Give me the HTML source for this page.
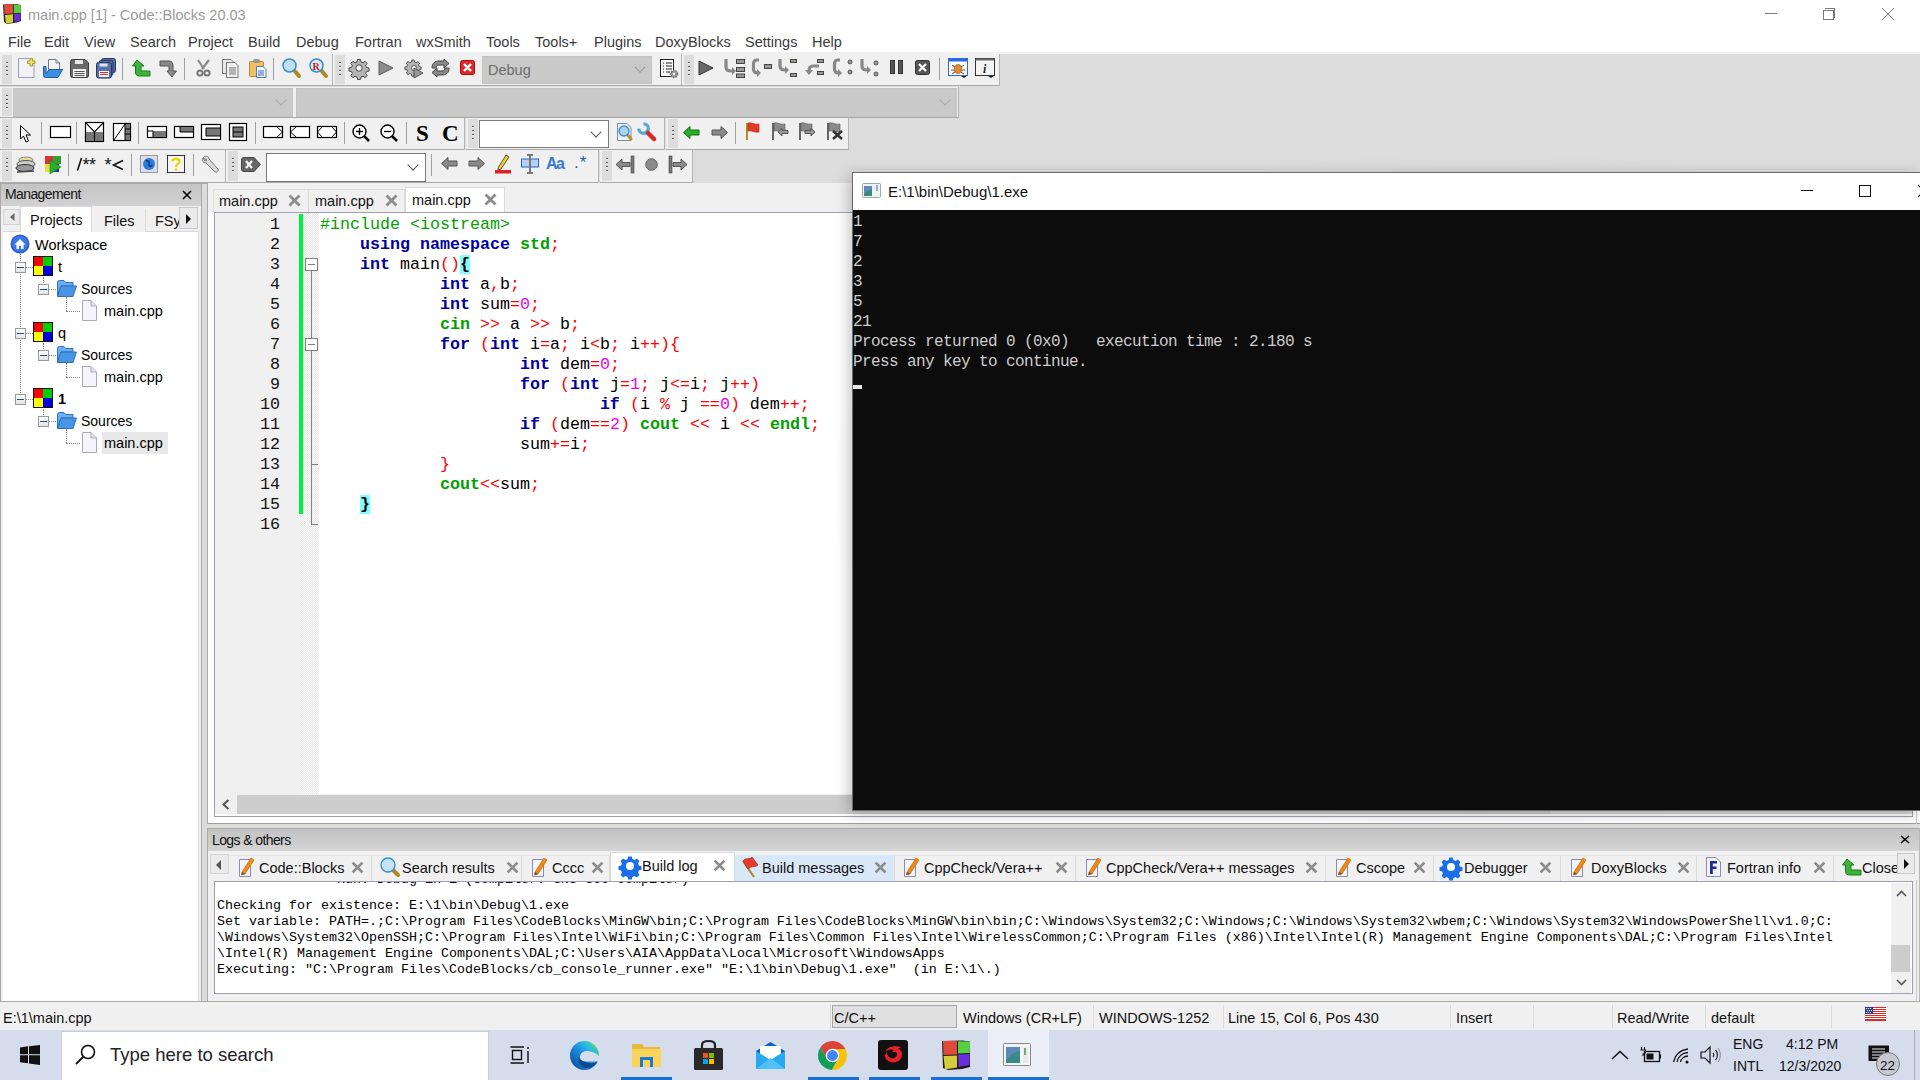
<!DOCTYPE html>
<html><head><meta charset="utf-8">
<style>
*{margin:0;padding:0;box-sizing:border-box}
html,body{width:1920px;height:1080px;overflow:hidden;background:#dcdcdc;font-family:"Liberation Sans",sans-serif;color:#000}
.a{position:absolute}
.t{position:absolute;white-space:pre;line-height:1}
svg{position:absolute;overflow:visible}
#title{left:0;top:0;width:1920px;height:28px;background:#fff}
#menu{left:0;top:28px;width:1920px;height:24px;background:#fff}
#dockline{left:0;top:52px;width:1920px;height:2px;background:#f0f0f0}
.menu span{position:absolute;top:6px;font-size:14.5px;color:#3a3a3a;white-space:pre}
.tb{position:absolute;background:#f0f0f0;border-bottom:1px solid #a9a9a9;border-right:1px solid #b4b4b4}
.grip{position:absolute;left:2px;top:1px;bottom:1px;width:10px;background:#dcdcdc}
.grip:before{content:"";position:absolute;left:4px;top:7px;width:2px;bottom:7px;background:repeating-linear-gradient(#555 0 1px,#fff 1px 2px,transparent 2px 4px)}
.sep{position:absolute;width:1px;background:#a0a0a0}
.combo{position:absolute;background:#c9c9c9;border:1px solid #c4c4c4}
.wcombo{position:absolute;background:#fff;border:1px solid #7a7a7a}
.chev{position:absolute;width:8px;height:8px;border-right:1.3px solid #777;border-bottom:1.3px solid #777;transform:rotate(45deg)}
#mgmt{left:0;top:183px;width:202px;height:821px;background:#f0f0f0}
#sash{left:202px;top:183px;width:5px;height:821px;background:#dcdcdc}
#editor{left:207px;top:183px;width:1713px;height:645px;background:#f0f0f0}
#console{left:852px;top:172px;width:1068px;height:639px;background:#0c0c0c;border:1px solid #5a5a5a;border-right:none}
#logs{left:207px;top:828px;width:1713px;height:176px;background:#f0f0f0}
#status{left:0;top:1004px;width:1920px;height:26px;background:#f0f0f0}
#taskbar{left:0;top:1030px;width:1920px;height:50px;background:#dee2ed}
</style></head>
<body>
<!--TITLE-->
<div id="title" class="a">
<svg style="left:3px;top:3px" width="20" height="21" viewBox="0 0 20 21">
<path d="M0 1.5L13 1L18 2V18L14 19.5L4 21L1 19Z" fill="#222"/>
<path d="M1 1.5 L10 1 L10 10.5 L1.5 11Z" fill="#e04a3a"/><path d="M10.8 1.2 L18 2.2 L17.8 10 L10.8 10.2Z" fill="#56d040"/>
<path d="M1.8 12 L10 11.2 L10 19.5 L3 20.5Z" fill="#d4cc38"/><path d="M11 11 L17.8 10.8 L17.5 17.5 L11.5 19Z" fill="#6a30d8"/>
</svg>
<div class="t" style="left:28px;top:8px;font-size:14.5px;color:#9a9a9a">main.cpp [1] - Code::Blocks 20.03</div>
<div class="a" style="left:1765px;top:13px;width:12px;height:1px;background:#7a7a7a"></div>
<div class="a" style="left:1823px;top:10px;width:11px;height:10px;border:1px solid #7a7a7a"></div>
<div class="a" style="left:1825px;top:8px;width:10px;height:10px;border-top:1px solid #7a7a7a;border-right:1px solid #7a7a7a"></div>
<svg style="left:1881px;top:7px" width="14" height="14"><path d="M1 1L13 13M13 1L1 13" stroke="#7a7a7a" stroke-width="1"/></svg>
</div>
<div id="menu" class="a menu">
<span style="left:8px">File</span><span style="left:44px">Edit</span><span style="left:84px">View</span><span style="left:130px">Search</span><span style="left:188px">Project</span><span style="left:248px">Build</span><span style="left:296px">Debug</span><span style="left:355px">Fortran</span><span style="left:416px">wxSmith</span><span style="left:486px">Tools</span><span style="left:535px">Tools+</span><span style="left:594px">Plugins</span><span style="left:655px">DoxyBlocks</span><span style="left:745px">Settings</span><span style="left:812px">Help</span>
</div>
<!--TOOLBARS-->
<div id="dockline" class="a"></div>
<!-- row1 toolbar A -->
<div class="tb" style="left:0;top:54px;width:333px;height:32px"><div class="grip"></div></div>
<div class="tb" style="left:333px;top:54px;width:349px;height:32px"><div class="grip"></div></div>
<div class="tb" style="left:682px;top:54px;width:318px;height:32px"><div class="grip"></div></div>
<div class="tb" style="left:0;top:87px;width:959px;height:31px"><div class="grip"></div></div>
<div class="tb" style="left:0;top:118px;width:465px;height:32px"><div class="grip"></div></div>
<div class="tb" style="left:466px;top:118px;width:199px;height:32px"><div class="grip"></div></div>
<div class="tb" style="left:666px;top:118px;width:183px;height:32px"><div class="grip"></div></div>
<div class="tb" style="left:0;top:150px;width:226px;height:33px"><div class="grip"></div></div>
<div class="tb" style="left:226px;top:150px;width:373px;height:33px"><div class="grip"></div></div>
<div class="tb" style="left:600px;top:150px;width:93px;height:33px"><div class="grip"></div></div>
<!-- row1 icons -->
<svg style="left:18px;top:58px" width="18" height="20"><path d="M0.5 0.5H11L16 5V19.5H0.5Z" fill="#f2f2fa" stroke="#9c9cc4"/><path d="M12 0.5h2.5v2.5h2.5v2.5h-2.5v2.5h-2.5v-2.5h-2.5v-2.5h2.5z" fill="#e8e46a" stroke="#a8a020" stroke-width="1"/></svg>
<svg style="left:43px;top:59px" width="20" height="19"><path d="M5.5 0.5H13L16.5 4V13H5.5Z" fill="#f6f6f6" stroke="#6a7a98"/><path d="M13 0.5V4H16.5" fill="none" stroke="#6a7a98"/><path d="M0.5 7.5V16.5Q0.5 18.5 2.5 18.5H15L19.5 10.5H6L3 15V7.5Z" fill="#3d8fe0" stroke="#1e5ca8"/></svg>
<svg style="left:70px;top:59px" width="19" height="19"><path d="M0.5 2.5Q0.5 0.5 2.5 0.5H15L18.5 4V16.5Q18.5 18.5 16.5 18.5H2.5Q0.5 18.5 0.5 16.5Z" fill="#6a6a6a" stroke="#3a3a3a"/><rect x="5" y="1" width="8" height="4" fill="#e8e8e8"/><rect x="3" y="10" width="13" height="8" fill="#f0f0f0"/><path d="M4.5 12.5h10M4.5 14.5h10M4.5 16.5h10" stroke="#555"/></svg>
<svg style="left:96px;top:58px" width="21" height="21"><rect x="5.5" y="0.5" width="14" height="14" rx="2" fill="#5a6e98" stroke="#24396a"/><rect x="3" y="2.5" width="14" height="15" rx="2" fill="#5a6e98" stroke="#24396a"/><rect x="0.5" y="4.5" width="15" height="15.5" rx="2" fill="#5872a8" stroke="#24396a"/><rect x="3.5" y="5.5" width="8" height="3" fill="#e0e4ec"/><rect x="3" y="13" width="10" height="6" fill="#f4f4f8"/><path d="M4 14.5h8M4 16.5h8" stroke="#d83030"/></svg>
<div class="sep" style="left:122px;top:58px;height:22px"></div>
<svg style="left:132px;top:59px" width="19" height="18"><path d="M5 1L0.5 7H3.5V13C3.5 16 5 17 8 17H18V12H9V7H12Z" fill="#3cb43c" stroke="#1d7a1d"/></svg>
<svg style="left:159px;top:60px" width="19" height="18"><path d="M1 1H10C13 1 14 3 14 6V11H17.5L13 17L8 11H10V6H1Z" fill="#8a8a8a" stroke="#555"/></svg>
<div class="sep" style="left:184px;top:58px;height:22px"></div>
<svg style="left:196px;top:59px" width="15" height="18"><path d="M2 1L8 10M13 1L6 10" stroke="#888" stroke-width="2.2"/><circle cx="4" cy="14" r="2.6" fill="none" stroke="#777" stroke-width="2"/><circle cx="11" cy="14" r="2.6" fill="none" stroke="#777" stroke-width="2"/></svg>
<svg style="left:222px;top:59px" width="17" height="19"><path d="M0.5 0.5H9L12 3.5V14.5H0.5Z" fill="#e8e8e8" stroke="#777"/><path d="M4.5 3.5H13L16 6.5V18.5H4.5Z" fill="#f0f0f0" stroke="#777"/><path d="M7 9h7M7 11h7M7 13h7M7 15h7" stroke="#777"/></svg>
<svg style="left:249px;top:58px" width="18" height="20"><rect x="0.5" y="3.5" width="14" height="15" rx="1" fill="#f0c060" stroke="#b88a2a"/><rect x="4" y="1" width="7" height="4" rx="2" fill="#999"/><path d="M7.5 8.5H14L17 11.5V19.5H7.5Z" fill="#f4f8ff" stroke="#5a7ab0"/><path d="M9 13h6M9 15h6M9 17h6" stroke="#3a6ac0"/></svg>
<div class="sep" style="left:273px;top:58px;height:22px"></div>
<svg style="left:282px;top:58px" width="19" height="20"><path d="M11 11L17 18" stroke="#b08a20" stroke-width="4" stroke-linecap="round"/><circle cx="7.5" cy="7.5" r="6.5" fill="#bfe0f2" stroke="#3c8cc4" stroke-width="1.5"/></svg>
<svg style="left:309px;top:58px" width="19" height="20"><path d="M11 11L17 18" stroke="#b08a20" stroke-width="4" stroke-linecap="round"/><circle cx="7.5" cy="7.5" r="6.5" fill="#d6ecf8" stroke="#3c8cc4" stroke-width="1.5"/><text x="3.5" y="11.5" font-size="10" font-weight="bold" fill="#c82020" font-family="Liberation Serif">R</text></svg>
<!-- toolbar B -->
<svg style="left:350px;top:59px" width="18" height="18" viewBox="-9 -9 18 18"><path d="M-1.5 -8.5h3l.5 2.5 2 .8 2.1-1.5 2.1 2.1-1.5 2.1.8 2 2.5.5v3l-2.5.5-.8 2 1.5 2.1-2.1 2.1-2.1-1.5-2 .8-.5 2.5h-3l-.5-2.5-2-.8-2.1 1.5-2.1-2.1 1.5-2.1-.8-2-2.5-.5v-3l2.5-.5.8-2-1.5-2.1 2.1-2.1 2.1 1.5 2-.8z" fill="#b4b4b4" stroke="#4a4a4a" stroke-width="1"/><circle r="3.2" fill="#f4f4f4" stroke="#4a4a4a"/></svg>
<svg style="left:378px;top:60px" width="16" height="16"><path d="M1 1L15 8L1 15Z" fill="#8c8c8c" stroke="#5a5a5a"/></svg>
<svg style="left:405px;top:59px" width="18" height="18" viewBox="-8 -8 18 18"><path d="M-1.2 -7h2.4l.4 2 1.6.7 1.7-1.2 1.7 1.7-1.2 1.7.7 1.6 2 .4v2.4l-2 .4-.7 1.6 1.2 1.7-1.7 1.7-1.7-1.2-1.6.7-.4 2h-2.4l-.4-2-1.6-.7-1.7 1.2-1.7-1.7 1.2-1.7-.7-1.6-2-.4v-2.4l2-.4.7-1.6-1.2-1.7 1.7-1.7 1.7 1.2 1.6-.7z" fill="#b4b4b4" stroke="#4a4a4a" stroke-width=".9"/><circle cx="1" cy="1" r="2.5" fill="#f4f4f4" stroke="#4a4a4a" stroke-width=".8"/><path d="M1 1L10 6L1 11Z" fill="#999" stroke="#4a4a4a" stroke-width=".9"/></svg>
<svg style="left:430px;top:59px" width="21" height="18"><path d="M2 9C2 4 5 2 9 2H14V0L19 4.5L14 9V6H9C7 6 6 7 6 9Z" fill="#8a8a8a" stroke="#444"/><path d="M19 9C19 14 16 16 12 16H7V18L2 13.5L7 9V12H12C14 12 15 11 15 9Z" fill="#8a8a8a" stroke="#444"/></svg>
<svg style="left:460px;top:60px" width="15" height="15"><rect x="0.5" y="0.5" width="14" height="14" rx="2" fill="#e02828" stroke="#a01010"/><path d="M4 4L11 11M11 4L4 11" stroke="#fff" stroke-width="2.4"/></svg>
<div class="combo" style="left:482px;top:56px;width:170px;height:28px"></div>
<div class="t" style="left:488px;top:63px;font-size:14.5px;color:#6d6d6d">Debug</div>
<div class="chev" style="left:636px;top:63px;border-color:#999"></div>
<svg style="left:660px;top:59px" width="18" height="20"><rect x="0.5" y="0.5" width="13" height="17" fill="#fff" stroke="#222"/><path d="M3 4h1M6 4h6M3 7h1M6 7h6M3 10h1M6 10h6M3 13h1M6 13h4" stroke="#222"/><circle cx="14" cy="15" r="3.5" fill="#999" stroke="#777" stroke-width="1.6" stroke-dasharray="1.5 1"/><circle cx="14" cy="15" r="1.2" fill="#eee"/></svg>
<!-- toolbar C -->
<svg style="left:698px;top:60px" width="16" height="16"><path d="M1 1L15 8L1 15Z" fill="#6a6a6a" stroke="#333"/></svg>
<svg style="left:724px;top:58px" width="21" height="20"><path d="M2 1V9C2 12 4 13 7 13H9" fill="none" stroke="#888" stroke-width="3.2"/><path d="M8 9L12 13L8 17Z" fill="#888"/><rect x="12.5" y="1.5" width="8" height="4" fill="#999" stroke="#444"/><rect x="12.5" y="9.5" width="8" height="4" fill="#999" stroke="#444"/><rect x="12.5" y="16" width="8" height="3.5" fill="#999" stroke="#444"/></svg>
<svg style="left:752px;top:58px" width="20" height="20"><path d="M7 2H5C2.5 2 1.5 4 1.5 6V11C1.5 14 3 15 6 15" fill="none" stroke="#888" stroke-width="3.2"/><path d="M5 11L9 15L5 19Z" fill="#888"/><rect x="12.5" y="6.5" width="7" height="4" fill="#999" stroke="#444"/></svg>
<svg style="left:778px;top:58px" width="20" height="20"><path d="M2 1V8C2 11 4 12 7 12H8" fill="none" stroke="#888" stroke-width="3.2"/><path d="M7 8L11 12L7 16Z" fill="#888"/><rect x="12.5" y="1.5" width="6" height="3" fill="#999" stroke="#444"/><rect x="12.5" y="15.5" width="6" height="3" fill="#999" stroke="#444"/></svg>
<svg style="left:805px;top:58px" width="20" height="20"><path d="M14 8H8C5 8 4 10 4 13" fill="none" stroke="#888" stroke-width="3.2"/><path d="M0 12L4 17L8 12Z" fill="#888"/><rect x="12.5" y="1.5" width="6" height="3" fill="#999" stroke="#444"/><rect x="12.5" y="13.5" width="6" height="3" fill="#999" stroke="#444"/></svg>
<svg style="left:833px;top:58px" width="21" height="20"><path d="M7 2H5C2.5 2 1.5 4 1.5 6V11C1.5 14 3 15 6 15" fill="none" stroke="#888" stroke-width="3.2"/><path d="M5 11L9 15L5 19Z" fill="#888"/><circle cx="17" cy="4" r="2" fill="#999" stroke="#555"/><circle cx="17" cy="14" r="2" fill="#999" stroke="#555"/></svg>
<svg style="left:860px;top:58px" width="20" height="20"><path d="M2 1V8C2 11 4 12 7 12H8" fill="none" stroke="#888" stroke-width="3.2"/><path d="M7 8L11 12L7 16Z" fill="#888"/><circle cx="16" cy="5" r="2" fill="#999" stroke="#555"/><circle cx="16" cy="16" r="2" fill="#999" stroke="#555"/></svg>
<svg style="left:890px;top:60px" width="14" height="16"><rect x="0.5" y="0.5" width="4" height="13" fill="#555" stroke="#333"/><rect x="8.5" y="0.5" width="4" height="13" fill="#555" stroke="#333"/></svg>
<svg style="left:915px;top:60px" width="15" height="15"><rect x="0.5" y="0.5" width="14" height="14" rx="2" fill="#555" stroke="#333"/><path d="M4 4L11 11M11 4L4 11" stroke="#fff" stroke-width="2.2"/></svg>
<div class="sep" style="left:939px;top:58px;height:22px"></div>
<svg style="left:948px;top:58px" width="21" height="20"><rect x="0.5" y="0.5" width="19" height="17" fill="#fff" stroke="#2a6ae0"/><rect x="0.5" y="0.5" width="19" height="3" fill="#2a6ae0"/><ellipse cx="10" cy="11" rx="3.5" ry="4.5" fill="#e08a3a" stroke="#8a4a10" stroke-width=".6"/><path d="M4 7L7 9M16 7L13 9M3 12H6.5M17 12H13.5M4 16L7 14M16 16L13 14" stroke="#8a4a10"/><path d="M13 18H19L16 20Z" fill="#222"/></svg>
<svg style="left:975px;top:58px" width="21" height="20"><rect x="0.5" y="0.5" width="19" height="17" fill="#f4f4f4" stroke="#333"/><rect x="0.5" y="0.5" width="19" height="2" fill="#666"/><text x="8" y="15" font-size="12" font-style="italic" font-weight="bold" font-family="Liberation Serif" fill="#222">i</text><path d="M13 18H19L16 20Z" fill="#222"/></svg>
<!-- row2 combos -->
<div class="combo" style="left:13px;top:88px;width:280px;height:29px"></div>
<div class="chev" style="left:277px;top:96px;border-color:#aaa"></div>
<div class="combo" style="left:296px;top:88px;width:661px;height:29px"></div>
<div class="chev" style="left:941px;top:96px;border-color:#aaa"></div>
<!-- row3 toolbar D -->
<svg style="left:20px;top:125px" width="11" height="18"><path d="M0.5 0.5V14L3.5 11L6 17L8.5 16L6 10H10.5Z" fill="#fff" stroke="#000"/></svg>
<div class="sep" style="left:41px;top:122px;height:22px"></div>
<svg style="left:50px;top:126px" width="21" height="13"><rect x="0.5" y="0.5" width="20" height="11" fill="#fff" stroke="#000" stroke-width="1.2"/></svg>
<div class="sep" style="left:76px;top:122px;height:22px"></div>
<svg style="left:85px;top:122px" width="20" height="20"><rect x="0.5" y="0.5" width="18" height="19" fill="#fff" stroke="#000" stroke-width="1.2"/><rect x="1" y="10" width="17" height="9" fill="#777"/><path d="M1 1L9.5 10L18 1M9.5 10V19" stroke="#000" stroke-width="1.1" fill="none"/></svg>
<svg style="left:113px;top:123px" width="19" height="19"><rect x="0.5" y="0.5" width="17" height="17" fill="#fff" stroke="#000" stroke-width="1.2"/><rect x="12" y="1" width="5" height="16" fill="#777"/><path d="M1 17L12 1M12 1V17M12 6H17M12 11H17" stroke="#000" stroke-width="1"/></svg>
<div class="sep" style="left:138px;top:122px;height:22px"></div>
<svg style="left:147px;top:126px" width="21" height="13"><rect x="0.5" y="0.5" width="19" height="11" fill="#fff" stroke="#000" stroke-width="1.2"/><rect x="6" y="5" width="13" height="6" fill="#777"/><path d="M1 5H6V11" stroke="#000" fill="none"/></svg>
<svg style="left:174px;top:126px" width="21" height="13"><rect x="0.5" y="0.5" width="19" height="11" fill="#fff" stroke="#000" stroke-width="1.2"/><rect x="6" y="1" width="13" height="5" fill="#777"/><path d="M6 1V6H19" stroke="#000" fill="none"/></svg>
<svg style="left:201px;top:124px" width="21" height="17"><rect x="0.5" y="0.5" width="19" height="15" fill="#fff" stroke="#000" stroke-width="1.2"/><rect x="5" y="4" width="14" height="8" fill="#777"/><path d="M19 4H5V12H19" stroke="#000" fill="none"/></svg>
<svg style="left:229px;top:123px" width="19" height="18"><rect x="0.5" y="0.5" width="17" height="17" fill="#fff" stroke="#000" stroke-width="1.2"/><rect x="4" y="4" width="10" height="10" fill="#777" stroke="#000"/><path d="M4 9H14" stroke="#000"/></svg>
<div class="sep" style="left:255px;top:122px;height:22px"></div>
<svg style="left:263px;top:126px" width="21" height="13"><rect x="0.5" y="0.5" width="19" height="11" fill="#fff" stroke="#000" stroke-width="1.2"/><path d="M14 1L19.5 6L14 11" stroke="#000" fill="none"/></svg>
<svg style="left:290px;top:126px" width="21" height="13"><rect x="0.5" y="0.5" width="19" height="11" fill="#fff" stroke="#000" stroke-width="1.2"/><path d="M6 1L0.5 6L6 11" stroke="#000" fill="none"/></svg>
<svg style="left:317px;top:126px" width="21" height="13"><rect x="0.5" y="0.5" width="19" height="11" fill="#fff" stroke="#000" stroke-width="1.2"/><path d="M5 1L0.5 6L5 11M15 1L19.5 6L15 11" stroke="#000" fill="none"/></svg>
<div class="sep" style="left:344px;top:122px;height:22px"></div>
<svg style="left:352px;top:124px" width="20" height="20"><circle cx="7.5" cy="7.5" r="6.5" fill="#fff" stroke="#000" stroke-width="1.4"/><path d="M7.5 4V11M4 7.5H11" stroke="#000" stroke-width="1.3"/><path d="M12 12L17 17" stroke="#000" stroke-width="2.5"/></svg>
<svg style="left:380px;top:124px" width="20" height="20"><circle cx="7.5" cy="7.5" r="6.5" fill="#fff" stroke="#000" stroke-width="1.4"/><path d="M4 7.5H11" stroke="#000" stroke-width="1.3"/><path d="M12 12L17 17" stroke="#000" stroke-width="2.5"/></svg>
<div class="sep" style="left:406px;top:122px;height:22px"></div>
<div class="t" style="left:416px;top:122px;font-family:'Liberation Serif';font-size:23px;font-weight:bold">S</div>
<div class="t" style="left:442px;top:122px;font-family:'Liberation Serif';font-size:23px;font-weight:bold">C</div>
<!-- toolbar E -->
<div class="wcombo" style="left:479px;top:120px;width:130px;height:28px"></div>
<div class="chev" style="left:592px;top:128px;border-color:#555"></div>
<svg style="left:617px;top:123px" width="17" height="19"><path d="M0.5 0.5H10L14 4.5V17.5H0.5Z" fill="#eef2f8" stroke="#7a8aa8"/><path d="M9 10L14 16" stroke="#c09020" stroke-width="3" stroke-linecap="round"/><circle cx="7" cy="8" r="5" fill="#a8d4f0" stroke="#3c8cc4" stroke-width="1.3"/></svg>
<svg style="left:637px;top:122px" width="20" height="20"><path d="M6.5 1.8A4.8 4.8 0 1 1 1.8 6.5" stroke="#5aaad8" stroke-width="3.2" fill="none"/><path d="M8.5 8.5L11 11" stroke="#5aaad8" stroke-width="3.5"/><path d="M11 11L17 17" stroke="#d42a2a" stroke-width="4.5" stroke-linecap="round"/></svg>
<!-- toolbar F -->
<svg style="left:683px;top:126px" width="17" height="13"><path d="M0.5 6.5L7 0.5V4H16V9H7V12.5Z" fill="#28b028" stroke="#117011"/></svg>
<svg style="left:711px;top:126px" width="17" height="13"><path d="M16.5 6.5L10 0.5V4H1V9H10V12.5Z" fill="#8a8a8a" stroke="#555"/></svg>
<div class="sep" style="left:735px;top:122px;height:22px"></div>
<svg style="left:746px;top:122px" width="15" height="20"><rect x="0" y="1" width="2" height="17" fill="#b8901a"/><path d="M2 1C6 0 8 3 13 2V10C8 11 6 8 2 9Z" fill="#e03a2a" stroke="#b02010" stroke-width=".6"/></svg>
<svg style="left:772px;top:122px" width="18" height="20"><rect x="0" y="1" width="2" height="17" fill="#666"/><path d="M2 1C6 0 8 3 13 2V10C8 11 6 8 2 9Z" fill="#8a8a8a" stroke="#555" stroke-width=".6"/><path d="M6 10L10 6V8.5H16V11.5H10V14Z" fill="#999" stroke="#555"/></svg>
<svg style="left:799px;top:122px" width="18" height="20"><rect x="0" y="1" width="2" height="17" fill="#666"/><path d="M2 1C6 0 8 3 13 2V10C8 11 6 8 2 9Z" fill="#8a8a8a" stroke="#555" stroke-width=".6"/><path d="M16 10L12 6V8.5H6V11.5H12V14Z" fill="#999" stroke="#555"/></svg>
<svg style="left:827px;top:122px" width="18" height="20"><rect x="0" y="1" width="2" height="17" fill="#666"/><path d="M2 1C6 0 8 3 13 2V10C8 11 6 8 2 9Z" fill="#8a8a8a" stroke="#555" stroke-width=".6"/><path d="M6 9L15 17M15 9L6 17" stroke="#333" stroke-width="2.4"/></svg>
<!-- row4 toolbar G -->
<svg style="left:15px;top:155px" width="21" height="20"><ellipse cx="11" cy="5" rx="7" ry="3" fill="#e8d890" stroke="#888"/><ellipse cx="11" cy="9" rx="9" ry="3.5" fill="#ccc" stroke="#555"/><ellipse cx="10" cy="13" rx="9" ry="3.5" fill="#999" stroke="#333"/><path d="M2 17L19 16" stroke="#444" stroke-width="1.5"/></svg>
<svg style="left:44px;top:156px" width="18" height="18"><rect x="1" y="0" width="8" height="8" fill="#e03030"/><rect x="9" y="0" width="8" height="8" fill="#30a030"/><rect x="1" y="8" width="8" height="8" fill="#e0e040"/><rect x="9" y="8" width="6" height="8" fill="#3030c0"/><path d="M6 4L17 11L6 18Z" fill="#28b028" stroke="#1a801a" stroke-width=".6"/></svg>
<div class="sep" style="left:68px;top:154px;height:22px"></div>
<svg style="left:76px;top:155px" width="22" height="18"><path d="M5.5 3L1.5 15.5" stroke="#111" stroke-width="1.6"/><text x="6.5" y="16" font-family="Liberation Sans" font-size="18" fill="#111" letter-spacing="-0.5">**</text></svg>
<svg style="left:104px;top:155px" width="22" height="18"><text x="0.5" y="16" font-family="Liberation Sans" font-size="18" fill="#111">*</text><path d="M19 5.5L9.5 10L19 14.5" stroke="#111" stroke-width="1.6" fill="none"/></svg>
<div class="sep" style="left:131px;top:154px;height:22px"></div>
<svg style="left:140px;top:155px" width="19" height="19"><rect x="0.5" y="0.5" width="17" height="17" fill="#dde" stroke="#999"/><circle cx="9" cy="9" r="6" fill="#2a7ad8"/><path d="M6 6C8 5 10 7 9 9C8 11 11 12 12 10" stroke="#0a3a80" stroke-width="1.5" fill="none"/></svg>
<svg style="left:167px;top:155px" width="19" height="19"><rect x="0.5" y="0.5" width="17" height="17" fill="#f4f4f4" stroke="#333"/><path d="M5.5 6.5C5.5 3 12.5 3 12.5 6.5C12.5 9 9 9 9 12" stroke="#e8d800" stroke-width="2.2" fill="none"/><circle cx="9" cy="14.5" r="1.3" fill="#e8d800"/></svg>
<div class="sep" style="left:193px;top:154px;height:22px"></div>
<svg style="left:201px;top:155px" width="19" height="19"><path d="M2 3C4 0 8 1 8 4L17 14C18 16 16 18 14 17L5 8C2 8 0 5 2 3L4 6L6 5Z" fill="#d8d8d8" stroke="#777"/></svg>
<!-- toolbar H -->
<svg style="left:241px;top:157px" width="20" height="15"><path d="M0.5 3Q0.5 0.5 3 0.5H13L19.5 7.5L13 14.5H3Q0.5 14.5 0.5 12Z" fill="#666" stroke="#444"/><path d="M5 4L11 11M11 4L5 11" stroke="#fff" stroke-width="2.2"/></svg>
<div class="wcombo" style="left:266px;top:153px;width:160px;height:29px"></div>
<div class="chev" style="left:409px;top:161px;border-color:#555"></div>
<div class="sep" style="left:431px;top:154px;height:22px"></div>
<svg style="left:441px;top:157px" width="17" height="13"><path d="M0.5 6.5L7 0.5V4H16V9H7V12.5Z" fill="#8a8a8a" stroke="#555"/></svg>
<svg style="left:468px;top:157px" width="17" height="13"><path d="M16.5 6.5L10 0.5V4H1V9H10V12.5Z" fill="#8a8a8a" stroke="#555"/></svg>
<svg style="left:495px;top:154px" width="17" height="20"><path d="M3 14L11 1L14 3L6 15L3 16Z" fill="#f0d020" stroke="#555"/><rect x="0" y="16" width="16" height="3.5" fill="#e02020"/></svg>
<svg style="left:521px;top:154px" width="19" height="20"><rect x="0.5" y="5" width="17" height="8" fill="#b8d0f0" stroke="#1a6ad0"/><path d="M9 1V19M6 1H12M6 19H12" stroke="#777" stroke-width="2"/></svg>
<div class="t" style="left:546px;top:156px;font-size:16px;font-weight:bold;color:#3a7ad0;letter-spacing:-1.5px">Aa</div>
<div class="t" style="left:574px;top:154px;font-size:17px;color:#1a5ab0;letter-spacing:1px">.*</div>
<!-- toolbar I -->
<svg style="left:615px;top:155px" width="20" height="19"><path d="M1 9.5L7 4V7.5H15V11.5H7V15Z" fill="#8a8a8a" stroke="#555"/><rect x="16" y="1" width="3" height="17" fill="#777" stroke="#444" stroke-width=".6"/></svg>
<svg style="left:645px;top:158px" width="13" height="13"><circle cx="6.5" cy="6.5" r="5.8" fill="#8a8a8a" stroke="#666"/></svg>
<svg style="left:668px;top:155px" width="20" height="19"><rect x="1" y="1" width="3" height="17" fill="#777" stroke="#444" stroke-width=".6"/><path d="M19 9.5L13 4V7.5H5V11.5H13V15Z" fill="#8a8a8a" stroke="#555"/></svg>

<!--/TOOLBARS-->

<!--MGMT-->
<div id="mgmt" class="a">
 <div class="a" style="left:1px;top:1px;width:200px;height:22px;background:linear-gradient(#c4c4c4,#d2d2d2)"></div>
 <div class="t" style="left:5px;top:4px;font-size:14px;letter-spacing:-0.6px;color:#111">Management</div>
 <svg style="left:182px;top:7px" width="10" height="10"><path d="M1 1L9 9M9 1L1 9" stroke="#000" stroke-width="1.6"/></svg>
 <!-- tabs row -->
 <div class="a" style="left:3px;top:48px;width:196px;height:1px;background:#d9d9d9"></div>
 <div class="a" style="left:3px;top:26px;width:17px;height:16px;background:#eaeaea;border:1px solid #d4d4d4"></div>
 <svg style="left:10px;top:30px" width="5" height="8"><path d="M4.5 0L0 4L4.5 8Z" fill="#666"/></svg>
 <div class="a" style="left:20px;top:23px;width:72px;height:27px;background:#fff;border:1px solid #d9d9d9;border-bottom:none"></div>
 <div class="t" style="left:30px;top:30px;font-size:14.5px;color:#111">Projects</div>
 <div class="a" style="left:92px;top:26px;width:54px;height:23px;background:#f0f0f0;border-right:1px solid #d9d9d9"></div>
 <div class="t" style="left:104px;top:31px;font-size:14.5px;color:#111">Files</div>
 <div class="t" style="left:155px;top:31px;font-size:14.5px;color:#111">FSy</div>
 <div class="a" style="left:179px;top:24px;width:19px;height:22px;background:#eaeaea;border:1px solid #c8c8c8"></div>
 <svg style="left:186px;top:31px" width="6" height="10"><path d="M0 0L5 5L0 10Z" fill="#111"/></svg>
 <!-- tree -->
 <div class="a" style="left:3px;top:49px;width:196px;height:772px;background:#fff;border-right:1px solid #dcdcdc"></div>
</div>
<div id="tree" class="a" style="left:0;top:0">
 <svg style="left:10px;top:234px" width="20" height="20"><circle cx="10" cy="10" r="9.5" fill="#2a5ad8"/><circle cx="10" cy="10" r="8" fill="#3a78e8"/><path d="M4.5 10.5L10 5L15.5 10.5H13.5V15H6.5V10.5Z" fill="#fff"/><rect x="9" y="12" width="2" height="3" fill="#3a78e8"/></svg>
 <div class="t" style="left:35px;top:238px;font-size:14.5px">Workspace</div>
 <!-- dotted lines -->
 <div class="a" style="left:20px;top:254px;width:1px;height:145px;border-left:1px dotted #888"></div>
 <!-- project rows at 267, 333, 399 -->
 <div class="a" style="left:15px;top:262px;width:11px;height:11px;border:1px solid #999;background:linear-gradient(#fff,#e4e4e4)"></div><div class="a" style="left:17px;top:267px;width:7px;height:1px;background:#2a4a9a"></div><div class="a" style="left:26px;top:267px;width:7px;height:1px;border-top:1px dotted #888"></div><svg style="left:33px;top:256px" width="20" height="20"><rect x="0" y="0" width="20" height="20" fill="#111"/><rect x="1" y="1" width="9" height="9" fill="#ff0000"/><rect x="10" y="1" width="9" height="9" fill="#00d000"/><rect x="1" y="10" width="9" height="9" fill="#ffff00"/><rect x="10" y="10" width="9" height="9" fill="#0000e0"/></svg><div class="a" style="left:43px;top:277px;width:1px;height:12px;border-left:1px dotted #888"></div><div class="a" style="left:38px;top:284px;width:11px;height:11px;border:1px solid #999;background:linear-gradient(#fff,#e4e4e4)"></div><div class="a" style="left:40px;top:289px;width:7px;height:1px;background:#2a4a9a"></div><div class="a" style="left:49px;top:289px;width:7px;height:1px;border-top:1px dotted #888"></div><svg style="left:57px;top:280px" width="20" height="17"><path d="M0.5 2.5Q0.5 0.5 2.5 0.5H7L9 2.5H16V6H4L0.5 16Z" fill="#6aaef0" stroke="#2a70c8"/><path d="M0.5 16.5L4 6H19.5L16 16.5Z" fill="#4a94e4" stroke="#2a70c8"/></svg><div class="a" style="left:66px;top:297px;width:1px;height:14px;border-left:1px dotted #888"></div><div class="a" style="left:66px;top:311px;width:14px;height:1px;border-top:1px dotted #888"></div><svg style="left:82px;top:300px" width="15" height="21"><path d="M0.5 0.5H9L14.5 6V20.5H0.5Z" fill="#f4f4fa" stroke="#a8a8c0"/><path d="M9 0.5V6H14.5" fill="#e0e0ea" stroke="#a8a8c0"/></svg><div class="a" style="left:15px;top:328px;width:11px;height:11px;border:1px solid #999;background:linear-gradient(#fff,#e4e4e4)"></div><div class="a" style="left:17px;top:333px;width:7px;height:1px;background:#2a4a9a"></div><div class="a" style="left:26px;top:333px;width:7px;height:1px;border-top:1px dotted #888"></div><svg style="left:33px;top:322px" width="20" height="20"><rect x="0" y="0" width="20" height="20" fill="#111"/><rect x="1" y="1" width="9" height="9" fill="#ff0000"/><rect x="10" y="1" width="9" height="9" fill="#00d000"/><rect x="1" y="10" width="9" height="9" fill="#ffff00"/><rect x="10" y="10" width="9" height="9" fill="#0000e0"/></svg><div class="a" style="left:43px;top:343px;width:1px;height:12px;border-left:1px dotted #888"></div><div class="a" style="left:38px;top:350px;width:11px;height:11px;border:1px solid #999;background:linear-gradient(#fff,#e4e4e4)"></div><div class="a" style="left:40px;top:355px;width:7px;height:1px;background:#2a4a9a"></div><div class="a" style="left:49px;top:355px;width:7px;height:1px;border-top:1px dotted #888"></div><svg style="left:57px;top:346px" width="20" height="17"><path d="M0.5 2.5Q0.5 0.5 2.5 0.5H7L9 2.5H16V6H4L0.5 16Z" fill="#6aaef0" stroke="#2a70c8"/><path d="M0.5 16.5L4 6H19.5L16 16.5Z" fill="#4a94e4" stroke="#2a70c8"/></svg><div class="a" style="left:66px;top:363px;width:1px;height:14px;border-left:1px dotted #888"></div><div class="a" style="left:66px;top:377px;width:14px;height:1px;border-top:1px dotted #888"></div><svg style="left:82px;top:366px" width="15" height="21"><path d="M0.5 0.5H9L14.5 6V20.5H0.5Z" fill="#f4f4fa" stroke="#a8a8c0"/><path d="M9 0.5V6H14.5" fill="#e0e0ea" stroke="#a8a8c0"/></svg><div class="a" style="left:15px;top:394px;width:11px;height:11px;border:1px solid #999;background:linear-gradient(#fff,#e4e4e4)"></div><div class="a" style="left:17px;top:399px;width:7px;height:1px;background:#2a4a9a"></div><div class="a" style="left:26px;top:399px;width:7px;height:1px;border-top:1px dotted #888"></div><svg style="left:33px;top:388px" width="20" height="20"><rect x="0" y="0" width="20" height="20" fill="#111"/><rect x="1" y="1" width="9" height="9" fill="#ff0000"/><rect x="10" y="1" width="9" height="9" fill="#00d000"/><rect x="1" y="10" width="9" height="9" fill="#ffff00"/><rect x="10" y="10" width="9" height="9" fill="#0000e0"/></svg><div class="a" style="left:43px;top:409px;width:1px;height:12px;border-left:1px dotted #888"></div><div class="a" style="left:38px;top:416px;width:11px;height:11px;border:1px solid #999;background:linear-gradient(#fff,#e4e4e4)"></div><div class="a" style="left:40px;top:421px;width:7px;height:1px;background:#2a4a9a"></div><div class="a" style="left:49px;top:421px;width:7px;height:1px;border-top:1px dotted #888"></div><svg style="left:57px;top:412px" width="20" height="17"><path d="M0.5 2.5Q0.5 0.5 2.5 0.5H7L9 2.5H16V6H4L0.5 16Z" fill="#6aaef0" stroke="#2a70c8"/><path d="M0.5 16.5L4 6H19.5L16 16.5Z" fill="#4a94e4" stroke="#2a70c8"/></svg><div class="a" style="left:66px;top:429px;width:1px;height:14px;border-left:1px dotted #888"></div><div class="a" style="left:66px;top:443px;width:14px;height:1px;border-top:1px dotted #888"></div><svg style="left:82px;top:432px" width="15" height="21"><path d="M0.5 0.5H9L14.5 6V20.5H0.5Z" fill="#f4f4fa" stroke="#a8a8c0"/><path d="M9 0.5V6H14.5" fill="#e0e0ea" stroke="#a8a8c0"/></svg>
 <div class="a" style="left:102px;top:432px;width:66px;height:22px;background:#e8e8e8"></div>
 <div class="t" style="left:58px;top:260px;font-size:14.5px;">t</div><div class="t" style="left:81px;top:282px;font-size:14px">Sources</div><div class="t" style="left:104px;top:304px;font-size:14.5px">main.cpp</div><div class="t" style="left:58px;top:326px;font-size:14.5px;">q</div><div class="t" style="left:81px;top:348px;font-size:14px">Sources</div><div class="t" style="left:104px;top:370px;font-size:14.5px">main.cpp</div><div class="t" style="left:58px;top:392px;font-size:14.5px;font-weight:bold;">1</div><div class="t" style="left:81px;top:414px;font-size:14px">Sources</div><div class="t" style="left:104px;top:436px;font-size:14.5px">main.cpp</div>
</div>

<div id="sash" class="a"></div><div class="a" style="left:0;top:183px;width:1920px;height:1px;background:#a8a8a8"></div><div class="a" style="left:0;top:183px;width:1px;height:818px;background:#a8a8a8"></div><div class="a" style="left:201px;top:183px;width:1px;height:818px;background:#a8a8a8"></div>
<!--EDITOR-->
<div id="editor" class="a">
 <div class="a" style="left:0;top:0;width:1px;height:641px;background:#a9a9a9"></div>
 <!-- tabs -->
 <div class="a" style="left:6px;top:6px;width:96px;height:23px;background:#f0f0f0;border:1px solid #dadada;border-bottom:none"></div>
 <div class="t" style="left:12px;top:11px;font-size:14.5px;color:#111">main.cpp</div>
 <svg style="left:82px;top:12px" width="11" height="11"><path d="M1.5 1.5L9.5 9.5M9.5 1.5L1.5 9.5" stroke="#8c8c8c" stroke-width="2.8" stroke-linecap="square"/></svg>
 <div class="a" style="left:102px;top:6px;width:96px;height:23px;background:#f0f0f0;border:1px solid #dadada;border-left:none;border-bottom:none"></div>
 <div class="t" style="left:108px;top:11px;font-size:14.5px;color:#111">main.cpp</div>
 <svg style="left:179px;top:12px" width="11" height="11"><path d="M1.5 1.5L9.5 9.5M9.5 1.5L1.5 9.5" stroke="#8c8c8c" stroke-width="2.8" stroke-linecap="square"/></svg>
 <div class="a" style="left:198px;top:4px;width:100px;height:26px;background:#fff;border:1px solid #dadada;border-bottom:none"></div>
 <div class="t" style="left:205px;top:10px;font-size:14.5px;color:#111">main.cpp</div>
 <svg style="left:278px;top:11px" width="11" height="11"><path d="M1.5 1.5L9.5 9.5M9.5 1.5L1.5 9.5" stroke="#8c8c8c" stroke-width="2.8" stroke-linecap="square"/></svg>
 <!-- frame -->
 <div class="a" style="left:1px;top:29px;width:1712px;height:611px;background:#fff"></div>
 <div class="a" style="left:7px;top:29px;width:1699px;height:605px;border:1px solid #a0a0b0;background:#fff"></div>
 <div class="a" style="left:1px;top:640px;width:1712px;height:1px;background:#a0a0a0"></div>
</div>
<div id="ed2" class="a" style="left:0;top:0">
 <div class="a" style="left:215px;top:213px;width:84px;height:582px;background:#f0f0f0"></div>
 <div class="a" style="left:299px;top:213px;width:20px;height:582px;background:repeating-conic-gradient(#eaeaea 0 25%,#fafafa 0 50%) 0 0/2px 2px"></div>
 <div class="a" style="left:299px;top:214px;width:4px;height:300px;background:#00f040"></div>
 <div class="a" style="left:215px;top:794px;width:637px;height:20px;background:#f0f0f0"></div>
 <div class="a" style="left:1551px;top:795px;width:361px;height:19px;background:#dadada"></div><div class="a" style="left:237px;top:795px;width:1314px;height:19px;background:#cdcdcd"></div><div class="a" style="left:1912px;top:212px;width:1px;height:605px;background:#a0a0b0"></div><div class="a" style="left:1916px;top:212px;width:1px;height:612px;background:#c8c8c8"></div>
 <svg style="left:222px;top:799px" width="8" height="11"><path d="M6.5 1L1.5 5.5L6.5 10" stroke="#555" stroke-width="2" fill="none"/></svg>
 <div class="a" style="left:215px;top:214.5px;width:65px;font-family:'Liberation Mono',monospace;font-size:16.667px;line-height:20px;text-align:right;color:#111;white-space:pre"><div>1</div><div>2</div><div>3</div><div>4</div><div>5</div><div>6</div><div>7</div><div>8</div><div>9</div><div>10</div><div>11</div><div>12</div><div>13</div><div>14</div><div>15</div><div>16</div></div>
 <div class="a" style="left:320px;top:214.5px;width:900px;font-family:'Liberation Mono',monospace;font-size:16.667px;line-height:20px;color:#000;white-space:pre"><div><span style="color:#00a000">#include &lt;iostream&gt;</span>&#8203;</div><div>    <span style="color:#0000a0;font-weight:bold">using</span> <span style="color:#0000a0;font-weight:bold">namespace</span> <span style="color:#00a000;font-weight:bold">std</span><span style="color:#ff0000">;</span>&#8203;</div><div>    <span style="color:#0000a0;font-weight:bold">int</span> main<span style="color:#ff0000">()</span><span style="background:#80ffff;font-weight:bold">{</span>&#8203;</div><div>            <span style="color:#0000a0;font-weight:bold">int</span> a<span style="color:#ff0000">,</span>b<span style="color:#ff0000">;</span>&#8203;</div><div>            <span style="color:#0000a0;font-weight:bold">int</span> sum<span style="color:#ff0000">=</span><span style="color:#f000f0">0</span><span style="color:#ff0000">;</span>&#8203;</div><div>            <span style="color:#00a000;font-weight:bold">cin</span> <span style="color:#ff0000">&gt;&gt;</span> a <span style="color:#ff0000">&gt;&gt;</span> b<span style="color:#ff0000">;</span>&#8203;</div><div>            <span style="color:#0000a0;font-weight:bold">for</span> <span style="color:#ff0000">(</span><span style="color:#0000a0;font-weight:bold">int</span> i<span style="color:#ff0000">=</span>a<span style="color:#ff0000">;</span> i<span style="color:#ff0000">&lt;</span>b<span style="color:#ff0000">;</span> i<span style="color:#ff0000">++){</span>&#8203;</div><div>                    <span style="color:#0000a0;font-weight:bold">int</span> dem<span style="color:#ff0000">=</span><span style="color:#f000f0">0</span><span style="color:#ff0000">;</span>&#8203;</div><div>                    <span style="color:#0000a0;font-weight:bold">for</span> <span style="color:#ff0000">(</span><span style="color:#0000a0;font-weight:bold">int</span> j<span style="color:#ff0000">=</span><span style="color:#f000f0">1</span><span style="color:#ff0000">;</span> j<span style="color:#ff0000">&lt;=</span>i<span style="color:#ff0000">;</span> j<span style="color:#ff0000">++)</span>&#8203;</div><div>                            <span style="color:#0000a0;font-weight:bold">if</span> <span style="color:#ff0000">(</span>i <span style="color:#ff0000">%</span> j <span style="color:#ff0000">==</span><span style="color:#f000f0">0</span><span style="color:#ff0000">)</span> dem<span style="color:#ff0000">++;</span>&#8203;</div><div>                    <span style="color:#0000a0;font-weight:bold">if</span> <span style="color:#ff0000">(</span>dem<span style="color:#ff0000">==</span><span style="color:#f000f0">2</span><span style="color:#ff0000">)</span> <span style="color:#00a000;font-weight:bold">cout</span> <span style="color:#ff0000">&lt;&lt;</span> i <span style="color:#ff0000">&lt;&lt;</span> <span style="color:#00a000;font-weight:bold">endl</span><span style="color:#ff0000">;</span>&#8203;</div><div>                    sum<span style="color:#ff0000">+=</span>i<span style="color:#ff0000">;</span>&#8203;</div><div>            <span style="color:#ff0000">}</span>&#8203;</div><div>            <span style="color:#00a000;font-weight:bold">cout</span><span style="color:#ff0000">&lt;&lt;</span>sum<span style="color:#ff0000">;</span>&#8203;</div><div>    <span style="background:#80ffff;font-weight:bold">}</span>&#8203;</div><div>&#8203;</div></div>
 <!-- folds -->
 <div class="a" style="left:311px;top:270px;width:1px;height:254px;background:#808080"></div>
 <div class="a" style="left:311px;top:464px;width:7px;height:1px;background:#808080"></div>
 <div class="a" style="left:311px;top:524px;width:7px;height:1px;background:#808080"></div>
 <div class="a" style="left:305px;top:258px;width:13px;height:13px;border:1px solid #808080;background:#fff"></div>
 <div class="a" style="left:308px;top:264px;width:7px;height:1px;background:#808080"></div>
 <div class="a" style="left:305px;top:338px;width:13px;height:13px;border:1px solid #808080;background:#fff"></div>
 <div class="a" style="left:308px;top:344px;width:7px;height:1px;background:#808080"></div>
</div>

<!--LOGS-->
<div id="logs" class="a" style="left:207px;top:828px;width:1713px;height:174px;background:#f0f0f0;border-left:1px solid #a9a9a9"></div>
<div class="a" style="left:207px;top:824px;width:1713px;height:5px;background:#dcdcdc"></div><div class="a" style="left:207px;top:828px;width:1713px;height:1px;background:#a9a9a9"></div><div class="a" style="left:208px;top:829px;width:1712px;height:22px;background:linear-gradient(#c2c2c2,#d4d4d4)"></div>
<div class="t" style="left:212px;top:833px;font-size:14px;letter-spacing:-0.6px;color:#111">Logs &amp; others</div>
<svg style="left:1900px;top:835px" width="10" height="9"><path d="M1 1L9 8M9 1L1 8" stroke="#000" stroke-width="1.6"/></svg>
<div class="a" style="left:210px;top:854px;width:19px;height:20px;background:#eaeaea;border:1px solid #d4d4d4"></div><svg style="left:216px;top:860px" width="6" height="10"><path d="M5 0L0 5L5 10Z" fill="#555"/></svg>
<div class="a" style="left:230px;top:855px;width:142px;height:26px;background:#f0f0f0;border-right:1px solid #dadada;border-top:1px solid #e4e4e4"></div><svg style="left:239px;top:857px" width="16" height="20"><path d="M0.5 2.5H11.5V19.5H0.5Z" fill="#f4f4fa" stroke="#8a8ab8"/><path d="M3 15L12 1L15 3L6 17L2.5 18Z" fill="#f08a10" stroke="#c05a00" stroke-width=".6"/><path d="M2.5 18L3 15L6 17Z" fill="#555"/></svg><div class="t" style="left:259px;top:861px;font-size:14.5px;color:#111">Code::Blocks</div><svg style="left:352px;top:862px" width="11" height="11"><path d="M1.5 1.5L9.5 9.5M9.5 1.5L1.5 9.5" stroke="#8c8c8c" stroke-width="2.6" stroke-linecap="square"/></svg>
<div class="a" style="left:372px;top:855px;width:150px;height:26px;background:#f0f0f0;border-right:1px solid #dadada;border-top:1px solid #e4e4e4"></div><svg style="left:380px;top:857px" width="20" height="20"><path d="M12 12L18 18" stroke="#b08a20" stroke-width="4" stroke-linecap="round"/><circle cx="8" cy="8" r="7" fill="#c4e4f6" stroke="#3c8cc4" stroke-width="1.4"/></svg><div class="t" style="left:402px;top:861px;font-size:14.5px;color:#111">Search results</div><svg style="left:507px;top:862px" width="11" height="11"><path d="M1.5 1.5L9.5 9.5M9.5 1.5L1.5 9.5" stroke="#8c8c8c" stroke-width="2.6" stroke-linecap="square"/></svg>
<div class="a" style="left:522px;top:855px;width:88px;height:26px;background:#f0f0f0;border-right:1px solid #dadada;border-top:1px solid #e4e4e4"></div><svg style="left:532px;top:857px" width="16" height="20"><path d="M0.5 2.5H11.5V19.5H0.5Z" fill="#f4f4fa" stroke="#8a8ab8"/><path d="M3 15L12 1L15 3L6 17L2.5 18Z" fill="#f08a10" stroke="#c05a00" stroke-width=".6"/><path d="M2.5 18L3 15L6 17Z" fill="#555"/></svg><div class="t" style="left:552px;top:861px;font-size:14.5px;color:#111">Cccc</div><svg style="left:592px;top:862px" width="11" height="11"><path d="M1.5 1.5L9.5 9.5M9.5 1.5L1.5 9.5" stroke="#8c8c8c" stroke-width="2.6" stroke-linecap="square"/></svg>
<div class="a" style="left:610px;top:852px;width:125px;height:30px;background:#fff;border:1px solid #dadada;border-bottom:none"></div><svg style="left:620px;top:856px" width="20" height="20" viewBox="-10 -10 20 20"><path d="M-1.8 -9.5h3.6l.6 2.6 2.2.9 2.3-1.4 2.5 2.5-1.4 2.3.9 2.2 2.6.6v3.6l-2.6.6-.9 2.2 1.4 2.3-2.5 2.5-2.3-1.4-2.2.9-.6 2.6h-3.6l-.6-2.6-2.2-.9-2.3 1.4-2.5-2.5 1.4-2.3-.9-2.2-2.6-.6v-3.6l2.6-.6.9-2.2-1.4-2.3 2.5-2.5 2.3 1.4 2.2-.9z" fill="#1a6ee8"/><circle r="4" fill="#fff"/></svg><div class="t" style="left:642px;top:859px;font-size:14.5px;color:#111">Build log</div><svg style="left:714px;top:860px" width="11" height="11"><path d="M1.5 1.5L9.5 9.5M9.5 1.5L1.5 9.5" stroke="#8c8c8c" stroke-width="2.6" stroke-linecap="square"/></svg>
<div class="a" style="left:735px;top:855px;width:160px;height:26px;background:#d9e8f8;border-right:1px solid #dadada"></div><svg style="left:742px;top:857px" width="17" height="21"><path d="M1 4L12 20" stroke="#b08a1a" stroke-width="2.2"/><path d="M1 4C4 0 8 3 10 0L16 8C13 11 10 8 6 12Z" fill="#e83a2a" stroke="#a01a10" stroke-width=".6"/></svg><div class="t" style="left:762px;top:861px;font-size:14.5px;color:#111">Build messages</div><svg style="left:875px;top:862px" width="11" height="11"><path d="M1.5 1.5L9.5 9.5M9.5 1.5L1.5 9.5" stroke="#8c8c8c" stroke-width="2.6" stroke-linecap="square"/></svg>
<div class="a" style="left:895px;top:855px;width:181px;height:26px;background:#f0f0f0;border-right:1px solid #dadada;border-top:1px solid #e4e4e4"></div><svg style="left:904px;top:857px" width="16" height="20"><path d="M0.5 2.5H11.5V19.5H0.5Z" fill="#f4f4fa" stroke="#8a8ab8"/><path d="M3 15L12 1L15 3L6 17L2.5 18Z" fill="#f08a10" stroke="#c05a00" stroke-width=".6"/><path d="M2.5 18L3 15L6 17Z" fill="#555"/></svg><div class="t" style="left:924px;top:861px;font-size:14.5px;color:#111">CppCheck/Vera++</div><svg style="left:1056px;top:862px" width="11" height="11"><path d="M1.5 1.5L9.5 9.5M9.5 1.5L1.5 9.5" stroke="#8c8c8c" stroke-width="2.6" stroke-linecap="square"/></svg>
<div class="a" style="left:1076px;top:855px;width:250px;height:26px;background:#f0f0f0;border-right:1px solid #dadada;border-top:1px solid #e4e4e4"></div><svg style="left:1086px;top:857px" width="16" height="20"><path d="M0.5 2.5H11.5V19.5H0.5Z" fill="#f4f4fa" stroke="#8a8ab8"/><path d="M3 15L12 1L15 3L6 17L2.5 18Z" fill="#f08a10" stroke="#c05a00" stroke-width=".6"/><path d="M2.5 18L3 15L6 17Z" fill="#555"/></svg><div class="t" style="left:1106px;top:861px;font-size:14.5px;color:#111">CppCheck/Vera++ messages</div><svg style="left:1306px;top:862px" width="11" height="11"><path d="M1.5 1.5L9.5 9.5M9.5 1.5L1.5 9.5" stroke="#8c8c8c" stroke-width="2.6" stroke-linecap="square"/></svg>
<div class="a" style="left:1326px;top:855px;width:108px;height:26px;background:#f0f0f0;border-right:1px solid #dadada;border-top:1px solid #e4e4e4"></div><svg style="left:1336px;top:857px" width="16" height="20"><path d="M0.5 2.5H11.5V19.5H0.5Z" fill="#f4f4fa" stroke="#8a8ab8"/><path d="M3 15L12 1L15 3L6 17L2.5 18Z" fill="#f08a10" stroke="#c05a00" stroke-width=".6"/><path d="M2.5 18L3 15L6 17Z" fill="#555"/></svg><div class="t" style="left:1356px;top:861px;font-size:14.5px;color:#111">Cscope</div><svg style="left:1414px;top:862px" width="11" height="11"><path d="M1.5 1.5L9.5 9.5M9.5 1.5L1.5 9.5" stroke="#8c8c8c" stroke-width="2.6" stroke-linecap="square"/></svg>
<div class="a" style="left:1434px;top:855px;width:127px;height:26px;background:#f0f0f0;border-right:1px solid #dadada;border-top:1px solid #e4e4e4"></div><svg style="left:1441px;top:857px" width="20" height="20" viewBox="-10 -10 20 20"><path d="M-1.8 -9.5h3.6l.6 2.6 2.2.9 2.3-1.4 2.5 2.5-1.4 2.3.9 2.2 2.6.6v3.6l-2.6.6-.9 2.2 1.4 2.3-2.5 2.5-2.3-1.4-2.2.9-.6 2.6h-3.6l-.6-2.6-2.2-.9-2.3 1.4-2.5-2.5 1.4-2.3-.9-2.2-2.6-.6v-3.6l2.6-.6.9-2.2-1.4-2.3 2.5-2.5 2.3 1.4 2.2-.9z" fill="#1a6ee8"/><circle r="4" fill="#fff"/></svg><div class="t" style="left:1464px;top:861px;font-size:14.5px;color:#111">Debugger</div><svg style="left:1540px;top:862px" width="11" height="11"><path d="M1.5 1.5L9.5 9.5M9.5 1.5L1.5 9.5" stroke="#8c8c8c" stroke-width="2.6" stroke-linecap="square"/></svg>
<div class="a" style="left:1561px;top:855px;width:136px;height:26px;background:#f0f0f0;border-right:1px solid #dadada;border-top:1px solid #e4e4e4"></div><svg style="left:1571px;top:857px" width="16" height="20"><path d="M0.5 2.5H11.5V19.5H0.5Z" fill="#f4f4fa" stroke="#8a8ab8"/><path d="M3 15L12 1L15 3L6 17L2.5 18Z" fill="#f08a10" stroke="#c05a00" stroke-width=".6"/><path d="M2.5 18L3 15L6 17Z" fill="#555"/></svg><div class="t" style="left:1591px;top:861px;font-size:14.5px;color:#111">DoxyBlocks</div><svg style="left:1678px;top:862px" width="11" height="11"><path d="M1.5 1.5L9.5 9.5M9.5 1.5L1.5 9.5" stroke="#8c8c8c" stroke-width="2.6" stroke-linecap="square"/></svg>
<div class="a" style="left:1697px;top:855px;width:137px;height:26px;background:#f0f0f0;border-right:1px solid #dadada;border-top:1px solid #e4e4e4"></div><svg style="left:1706px;top:857px" width="15" height="20"><path d="M0.5 0.5H10L14.5 5V19.5H0.5Z" fill="#f4f4fa" stroke="#8a8ab8"/><path d="M4 4H11V6.5H6.8V9.5H10.5V12H6.8V17H4Z" fill="#1a2a9a"/></svg><div class="t" style="left:1727px;top:861px;font-size:14.5px;color:#111">Fortran info</div><svg style="left:1814px;top:862px" width="11" height="11"><path d="M1.5 1.5L9.5 9.5M9.5 1.5L1.5 9.5" stroke="#8c8c8c" stroke-width="2.6" stroke-linecap="square"/></svg>
<div class="a" style="left:1834px;top:855px;width:64px;height:26px;background:#f0f0f0;border-top:1px solid #e4e4e4"></div><svg style="left:1842px;top:858px" width="20" height="19"><path d="M5 1L0.5 7H3.5V13C3.5 16 5 17 8 17H19V12H9V7H12Z" fill="#3cb43c" stroke="#1d7a1d"/></svg><div class="a" style="left:1834px;top:855px;width:63px;height:26px;overflow:hidden"><div class="t" style="left:28px;top:6px;font-size:14.5px;color:#111">Close...</div></div><div class="a" style="left:1897px;top:853px;width:18px;height:21px;background:#eaeaea;border:1px solid #c8c8c8"></div><svg style="left:1904px;top:859px" width="6" height="10"><path d="M0 0L5 5L0 10Z" fill="#111"/></svg>
<div class="a" style="left:214px;top:881px;width:1699px;height:113px;background:#fff;border:1px solid #a0a0b0;overflow:hidden"><div class="a" style="left:2px;top:-10px;font-family:'Liberation Mono',monospace;font-size:13.333px;color:#000;white-space:pre;line-height:16px">-------------- Run: Debug in 1 (compiler: GNU GCC Compiler)---------------</div><div class="a" style="left:2px;top:16px;font-family:'Liberation Mono',monospace;font-size:13.333px;color:#000;white-space:pre;line-height:16px">Checking for existence: E:\1\bin\Debug\1.exe
Set variable: PATH=.;C:\Program Files\CodeBlocks\MinGW\bin;C:\Program Files\CodeBlocks\MinGW\bin\bin;C:\Windows\System32;C:\Windows;C:\Windows\System32\wbem;C:\Windows\System32\WindowsPowerShell\v1.0;C:
\Windows\System32\OpenSSH;C:\Program Files\Intel\WiFi\bin;C:\Program Files\Common Files\Intel\WirelessCommon;C:\Program Files (x86)\Intel\Intel(R) Management Engine Components\DAL;C:\Program Files\Intel
\Intel(R) Management Engine Components\DAL;C:\Users\AIA\AppData\Local\Microsoft\WindowsApps
Executing: "C:\Program Files\CodeBlocks/cb_console_runner.exe" "E:\1\bin\Debug\1.exe"  (in E:\1\.)</div><div class="a" style="left:1676px;top:1px;width:20px;height:110px;background:#f0f0f0"></div><svg style="left:1681px;top:8px" width="11" height="7"><path d="M1 6L5.5 1.5L10 6" stroke="#555" stroke-width="1.6" fill="none"/></svg><div class="a" style="left:1676px;top:63px;width:19px;height:27px;background:#cdcdcd"></div><div class="a" style="left:0;top:0;width:0;height:0"></div><svg style="left:1681px;top:97px" width="11" height="7"><path d="M1 1L5.5 5.5L10 1" stroke="#555" stroke-width="1.6" fill="none"/></svg></div>
<div class="a" style="left:1916px;top:880px;width:1px;height:121px;background:#c8c8c8"></div><div class="a" style="left:1919px;top:828px;width:1px;height:173px;background:#b8b8b8"></div><div class="a" style="left:0px;top:1001px;width:1920px;height:1px;background:#a9a9a9"></div>
<!--STATUS-->
<div id="status" class="a" style="left:0;top:1002px;width:1920px;height:28px;background:#f0f0f0"></div>
<div class="t" style="left:3px;top:1011px;font-size:14.5px;color:#111">E:\1\main.cpp</div><div class="a" style="left:830px;top:1004px;width:1px;height:25px;background:#dadada"></div><div class="a" style="left:832px;top:1005px;width:125px;height:23px;background:#e0e0e0;border:1px solid #a8a8a8"></div><div class="t" style="left:834px;top:1011px;font-size:14.5px;color:#111">C/C++</div><div class="t" style="left:963px;top:1011px;font-size:14.5px;color:#111">Windows (CR+LF)</div><div class="t" style="left:1099px;top:1011px;font-size:14.5px;color:#111">WINDOWS-1252</div><div class="t" style="left:1228px;top:1011px;font-size:14.5px;color:#111">Line 15, Col 6, Pos 430</div><div class="t" style="left:1456px;top:1011px;font-size:14.5px;color:#111">Insert</div><div class="t" style="left:1617px;top:1011px;font-size:14.5px;color:#111">Read/Write</div><div class="t" style="left:1711px;top:1011px;font-size:14.5px;color:#111">default</div><div class="a" style="left:1093px;top:1005px;width:1px;height:23px;background:#dadada"></div><div class="a" style="left:1223px;top:1005px;width:1px;height:23px;background:#dadada"></div><div class="a" style="left:1450px;top:1005px;width:1px;height:23px;background:#dadada"></div><div class="a" style="left:1533px;top:1005px;width:1px;height:23px;background:#dadada"></div><div class="a" style="left:1612px;top:1005px;width:1px;height:23px;background:#dadada"></div><div class="a" style="left:1705px;top:1005px;width:1px;height:23px;background:#dadada"></div><div class="a" style="left:1831px;top:1005px;width:1px;height:23px;background:#dadada"></div><svg style="left:1865px;top:1007px" width="21" height="14" shape-rendering="crispEdges"><rect width="21" height="14" fill="#fff"/><rect y="0" width="21" height="1" fill="#e02a2a"/><rect y="2" width="21" height="1" fill="#e02a2a"/><rect y="4" width="21" height="1" fill="#e02a2a"/><rect y="6" width="21" height="1" fill="#e02a2a"/><rect y="8" width="21" height="1" fill="#e02a2a"/><rect y="10" width="21" height="1" fill="#e02a2a"/><rect y="12" width="21" height="2" fill="#e02a2a"/><rect width="8" height="7" fill="#2a3aa8"/><path d="M1 1h1M3 1h1M5 1h1M2 3h1M4 3h1M6 3h1M1 5h1M3 5h1M5 5h1" stroke="#fff" stroke-width="1"/></svg>
<!--TASKBAR-->
<div id="taskbar" class="a" style="left:0;top:1030px;width:1920px;height:50px;background:#d5dcec"></div>
<svg style="left:20px;top:1045px" width="20" height="20"><path d="M0 2.5L8 1.3V9.3H0ZM9 1.2L20 0V9.3H9ZM0 10.3H8V18.3L0 17.2ZM9 10.3H20V20L9 18.5Z" fill="#111"/></svg><div class="a" style="left:61px;top:1031px;width:428px;height:49px;background:#fff;border:1px solid #c8ccd8;border-bottom:none"></div><svg style="left:75px;top:1044px" width="21" height="22"><circle cx="13" cy="8" r="6.5" fill="none" stroke="#111" stroke-width="1.6"/><path d="M8.5 12.5L1 20" stroke="#111" stroke-width="1.8"/></svg><div class="t" style="left:110px;top:1046px;font-size:18.5px;color:#222">Type here to search</div><svg style="left:509px;top:1045px" width="21" height="20"><path d="M1.5 2H15M1.5 18H15" stroke="#111" stroke-width="1.4"/><rect x="3.5" y="5.5" width="9" height="9" fill="none" stroke="#111" stroke-width="1.4"/><path d="M19 2V4M19 6V18" stroke="#111" stroke-width="1.4"/></svg><svg style="left:569px;top:1040px" width="31" height="31" viewBox="0 0 31 31"><defs><linearGradient id="eg" x1="0.1" y1="0.9" x2="0.9" y2="0.1"><stop offset="0" stop-color="#0b4fa0"/><stop offset=".45" stop-color="#1a8ad8"/><stop offset=".75" stop-color="#2ab8e8"/><stop offset="1" stop-color="#5ad86a"/></linearGradient></defs><circle cx="15.5" cy="15.5" r="14.5" fill="url(#eg)"/><path d="M11 17.5C11 12.5 15 10.5 19 11C24 11.5 28 14 31 17V21.5H14C12.5 21.5 11 19.5 11 17.5Z" fill="#d5dcec"/><path d="M9 18C9 25 15 28.5 20 28C24 27.5 27 25 28.5 21C26 23 23 23.5 20.5 23C15 22 12 20 9 18Z" fill="#0c4a94"/></svg><svg style="left:631px;top:1042px" width="31" height="27"><path d="M1 2H11L13 5H29V24H1Z" fill="#e8b838"/><path d="M1 7H30V25H1Z" fill="#fad45a"/><path d="M9 15H22V25H19V18H12V25H9Z" fill="#1a78d8"/></svg><div class="a" style="left:621px;top:1077px;width:51px;height:3px;background:#1a6ed0"></div><svg style="left:693px;top:1040px" width="31" height="31"><path d="M9 9V5C9 2 11 1 15.5 1C20 1 22 2 22 5V9" stroke="#222" stroke-width="2.2" fill="none"/><rect x="1" y="8" width="29" height="22" rx="1.5" fill="#2a2a2a"/><rect x="10" y="13" width="5" height="5" fill="#f25022"/><rect x="16" y="13" width="5" height="5" fill="#7fba00"/><rect x="10" y="19" width="5" height="5" fill="#00a4ef"/><rect x="16" y="19" width="5" height="5" fill="#ffb900"/></svg><svg style="left:755px;top:1041px" width="31" height="29"><path d="M1 10L15.5 1L30 10V28H1Z" fill="#0a64c4"/><path d="M5 5H26V14L15.5 20L5 14Z" fill="#fff"/><path d="M1 10L15.5 19L30 10V28H1Z" fill="#28a8f0"/><path d="M1 28L15.5 17L30 28Z" fill="#50c0f8"/></svg><svg style="left:817px;top:1040px" width="31" height="31"><path d="M3.39 7.53A14.5 14.5 0 0 1 28.46 9L15.5 9L15.5 15.5L9.87 18.75Z" fill="#db4437"/><path d="M28.46 9A14.5 14.5 0 0 1 14.65 29.97L21.13 18.75L15.5 15.5L15.5 9Z" fill="#f4c20d"/><path d="M14.65 29.97A14.5 14.5 0 0 1 3.39 7.53L9.87 18.75L15.5 15.5L21.13 18.75Z" fill="#0f9d58"/><circle cx="15.5" cy="15.5" r="6.8" fill="#fff"/><circle cx="15.5" cy="15.5" r="5.4" fill="#4285f4"/></svg><div class="a" style="left:808px;top:1077px;width:51px;height:3px;background:#1a6ed0"></div><svg style="left:878px;top:1040px" width="31" height="31"><rect width="30" height="30" rx="3" fill="#111"/><path d="M7 12C9 7 16 5 23 7L20 9C24 10 25 14 23 18C21 23 13 24 9 20C6 17 7 14 9 12C9 16 12 19 16 18C19 17 20 14 18 12H14L16 10C12 9 9 10 7 12Z" fill="#e8202a"/></svg><div class="a" style="left:869px;top:1077px;width:51px;height:3px;background:#1a6ed0"></div><svg style="left:942px;top:1040px" width="29" height="30"><path d="M0 1L20 0.5L28 1.5V27L20 29L6 30L1 28Z" fill="#1a1a1a"/><path d="M1 1L15 1V14.5L1.5 15Z" fill="#e04a3a"/><path d="M16 1.2L28 1.5L27.8 13L16 13.5Z" fill="#56d040"/><path d="M1.5 16L15 15.5V27.5L3 29.5Z" fill="#d4cc38"/><path d="M16 14.5L27.8 14L27.5 25L16.5 27Z" fill="#6a30d8"/></svg><div class="a" style="left:931px;top:1077px;width:51px;height:3px;background:#1a6ed0"></div><div class="a" style="left:988px;top:1030px;width:61px;height:50px;background:#eceff7"></div><svg style="left:1003px;top:1043px" width="29" height="24"><rect x="0.5" y="0.5" width="27" height="22" rx="1" fill="#f4f4f4" stroke="#888"/><rect x="3" y="4" width="14" height="16" fill="#3a8a8a"/><path d="M3 4H17V8C12 9 7 12 3 17Z" fill="#5a8ab8"/><path d="M20 4H25V20H20Z" fill="#eaeaea"/><path d="M22 5V12" stroke="#3a9a6a" stroke-width="1.5"/></svg><div class="a" style="left:988px;top:1077px;width:61px;height:3px;background:#1a6ed0"></div><svg style="left:1611px;top:1050px" width="18" height="10"><path d="M1 9L9 1.5L17 9" stroke="#111" stroke-width="1.5" fill="none"/></svg><svg style="left:1640px;top:1047px" width="21" height="16"><rect x="4.5" y="4.5" width="15" height="10" fill="none" stroke="#111" stroke-width="1.3"/><rect x="6.5" y="6.5" width="7" height="6" fill="#111"/><rect x="19.5" y="7.5" width="1.5" height="4" fill="#111"/><path d="M1.5 0V3M4.5 0V3M0.5 3H5.5V5C5.5 7 3 7 3 7V9" stroke="#111" stroke-width="1.1" fill="none"/></svg><svg style="left:1672px;top:1047px" width="20" height="17"><path d="M1.5 15C3 8 8 3 16 2M5 15C6 10 10 6 16 5.5M8.5 15C9 12 12 9 16 9" stroke="#111" stroke-width="1.3" fill="none"/><circle cx="15" cy="15" r="1.5" fill="#111"/></svg><svg style="left:1700px;top:1046px" width="22" height="19"><path d="M1 6H5L10 1V17L5 12H1Z" fill="none" stroke="#111" stroke-width="1.2"/><path d="M13 7C14 8 14 10 13 11M15.5 4C18 6 18 12 15.5 14" stroke="#111" stroke-width="1.1" fill="none"/><path d="M18 2C21 5 21 13 18 16" stroke="#888" stroke-width="1" fill="none"/></svg><div class="t" style="left:1733px;top:1037px;font-size:14px;color:#111">ENG</div><div class="t" style="left:1733px;top:1059px;font-size:14px;color:#111">INTL</div><div class="t" style="left:1786px;top:1037px;font-size:14px;color:#111">4:12 PM</div><div class="t" style="left:1779px;top:1059px;font-size:14px;color:#111">12/3/2020</div><svg style="left:1868px;top:1045px" width="36" height="32"><path d="M0.5 0.5H21V16H0.5Z" fill="#111"/><path d="M4 4H17M4 7H17M4 10H17M4 13H13" stroke="#eee" stroke-width="1.1"/><circle cx="20" cy="19" r="11.5" fill="#c6c9d0" stroke="#777" stroke-width="1"/><text x="12" y="24.5" font-family="Liberation Sans" font-size="13.5" fill="#111">22</text></svg><div class="a" style="left:1914px;top:1030px;width:1px;height:50px;background:#a8acb8"></div>
<!--CONSOLE-->
<div class="a" style="left:812px;top:140px;width:1108px;height:700px;background:radial-gradient(ellipse at 60% 50%,rgba(0,0,0,0.10),rgba(0,0,0,0) 70%);pointer-events:none"></div><div id="console" class="a" style="left:852px;top:172px;width:1068px;height:639px;background:#0c0c0c;border:1px solid #6a6a6a;border-right:none;box-shadow:-3px 3px 14px rgba(0,0,0,0.24)"></div><div class="a" style="left:853px;top:173px;width:1067px;height:37px;background:#fff"></div><svg style="left:862px;top:183px" width="20" height="16"><rect x="0.5" y="0.5" width="18" height="14" rx="1" fill="#f2f2f2" stroke="#9aa"/><rect x="2" y="3" width="8" height="10" fill="#3d8a7a"/><path d="M2 3H10V6C7 7 4 9 2 11Z" fill="#5a8ac0"/><path d="M15 2V8" stroke="#3a8ac8" stroke-width="1.2"/></svg><div class="t" style="left:888px;top:184px;font-size:15px;color:#111">E:\1\bin\Debug\1.exe</div><div class="a" style="left:1801px;top:190px;width:12px;height:1px;background:#111"></div><div class="a" style="left:1859px;top:185px;width:12px;height:12px;border:1px solid #111"></div><svg style="left:1917px;top:184px" width="14" height="14"><path d="M1 1L13 13M13 1L1 13" stroke="#111" stroke-width="1.1"/></svg><div class="a" style="left:853px;top:212px;font-family:'Liberation Mono',monospace;font-size:16px;letter-spacing:-0.6px;color:#cccccc;white-space:pre;line-height:20px">1
7
2
3
5
21
Process returned 0 (0x0)   execution time : 2.180 s
Press any key to continue.</div><div class="a" style="left:853px;top:385px;width:9px;height:4px;background:#e8e8e8"></div>
</body></html>
